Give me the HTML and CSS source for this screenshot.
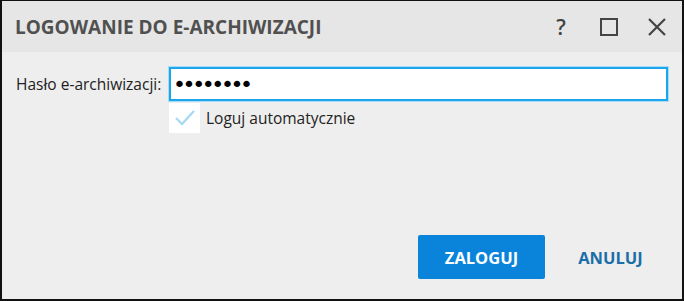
FILE: index.html
```html
<!DOCTYPE html>
<html lang="pl">
<head>
    <meta charset="UTF-8">
    <title>Logowanie do e-archiwizacji</title>
    <link rel="stylesheet" href="styles.css">
</head>
<body>
    <div class="dialog">
        <div class="titlebar">
            <h1 class="title">LOGOWANIE DO E-ARCHIWIZACJI</h1>
            <div class="title-buttons">
                <span class="tb-help">?</span>
                <span class="tb-max">
                    <svg width="18" height="18" viewBox="0 0 18 18"><rect x="1" y="1" width="16" height="16" fill="none" stroke="#444" stroke-width="2"/></svg>
                </span>
                <span class="tb-close">
                    <svg width="18" height="18" viewBox="0 0 18 18"><path d="M1 1 L17 17 M17 1 L1 17" stroke="#444" stroke-width="2.2"/></svg>
                </span>
            </div>
        </div>

        <div class="content">
            <div class="form-row">
                <label class="label" for="pass">Hasło e-archiwizacji:</label>
                <input class="password" id="pass" type="password" value="12345678">
            </div>
            <div class="check-row">
                <span class="checkbox">
                    <svg width="22" height="18" viewBox="0 0 22 18"><path d="M2 9 L8 15 L20 2" fill="none" stroke="#a9daf3" stroke-width="2.4"/></svg>
                </span>
                <span class="check-label">Loguj automatycznie</span>
            </div>

            <div class="footer">
                <button class="btn btn-primary">ZALOGUJ</button>
                <button class="btn btn-link">ANULUJ</button>
            </div>
        </div>
    </div>
</body>
</html>
```

FILE: styles.css
```css
html, body {
    margin: 0;
    padding: 0;
}

body {
    font-family: 'Open Sans', 'Liberation Sans', sans-serif;
    color: #222;
    background: #eeeeee;
}

.dialog {
    box-sizing: border-box;
    width: 684px;
    height: 301px;
    border: 2px solid #111;
    border-top-width: 1px;
    background: #eeeeee;
    display: flex;
    flex-direction: column;
}

.titlebar {
    height: 51px;
    background: #e6e6e6;
    display: flex;
    align-items: center;
    justify-content: space-between;
    padding: 0 16px 0 13px;
}

.title {
    margin: 0;
    font-size: 19px;
    font-weight: 700;
    color: #505050;
}

.title-buttons {
    display: flex;
    align-items: center;
    gap: 30px;
}

.tb-help {
    font-size: 21px;
    font-weight: 600;
    color: #444;
    width: 14px;
    text-align: center;
    margin-right: 2px;
}

.tb-max, .tb-close {
    display: flex;
}

.content {
    flex: 1;
    display: flex;
    flex-direction: column;
    padding: 15px 14px 20px 14px;
}

.form-row {
    display: grid;
    grid-template-columns: 153px 1fr;
    align-items: center;
}

.label {
    font-size: 15.5px;
    color: #222;
}

.password {
    box-sizing: border-box;
    height: 34px;
    margin: 0;
    border: 2px solid #1ba6ec;
    box-shadow: 0 0 0 1px #a9dcf6;
    background: #fff;
    padding: 0 2px;
    font-family: 'DejaVu Sans', sans-serif;
    font-size: 22px;
    letter-spacing: -3.4px;
    color: #000;
    outline: none;
}

.check-row {
    display: flex;
    align-items: center;
    gap: 6px;
    margin: 2px 0 0 153px;
}

.checkbox {
    width: 31px;
    height: 30px;
    background: #fff;
    display: flex;
    align-items: center;
    justify-content: center;
}

.check-label {
    font-size: 15.5px;
    color: #222;
}

.footer {
    margin-top: auto;
    display: flex;
    justify-content: flex-end;
    gap: 2px;
    margin-right: -6px;
}

.btn {
    width: 127px;
    height: 44px;
    border: none;
    border-radius: 2px;
    font-family: 'Open Sans', 'Liberation Sans', sans-serif;
    font-size: 16.5px;
    font-weight: 700;
    cursor: pointer;
}

.btn-primary {
    background: #0984da;
    color: #fff;
}

.btn-link {
    background: transparent;
    color: #1b6ea8;
}
```
